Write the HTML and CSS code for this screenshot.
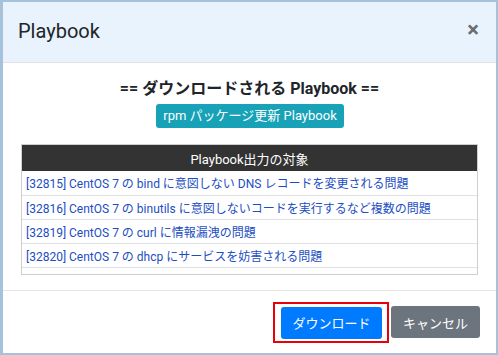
FILE: index.html
```html
<!DOCTYPE html>
<html lang="ja">
<head>
    <meta charset="UTF-8">
    <meta name="viewport" content="width=device-width, initial-scale=1.0">
    <title>Playbook</title>
    <link rel="stylesheet" href="styles.css">
</head>
<body>
    <div class="modal">
        <div class="modal-header">
            <h5 class="modal-title">Playbook</h5>
            <button class="close">&times;</button>
        </div>

        <div class="modal-body">
            <h6 class="target-title">== ダウンロードされる Playbook ==</h6>
            <div class="badge-row">
                <span class="badge">rpm パッケージ更新 Playbook</span>
            </div>

            <div class="table-wrap">
                <table>
                    <thead>
                        <tr>
                            <th>Playbook出力の対象</th>
                        </tr>
                    </thead>
                    <tbody>
                        <tr><td><a href="#">[32815] CentOS 7 の bind に意図しない DNS レコードを変更される問題</a></td></tr>
                        <tr><td><a href="#">[32816] CentOS 7 の binutils に意図しないコードを実行するなど複数の問題</a></td></tr>
                        <tr><td><a href="#">[32819] CentOS 7 の curl に情報漏洩の問題</a></td></tr>
                        <tr><td><a href="#">[32820] CentOS 7 の dhcp にサービスを妨害される問題</a></td></tr>
                        <tr><td><a href="#">[32821] CentOS 7 の elfutils にサービスを妨害される複数の問題</a></td></tr>
                        <tr><td><a href="#">[32822] CentOS 7 の file に意図しないコードを実行される問題</a></td></tr>
                    </tbody>
                </table>
            </div>
        </div>

        <div class="modal-footer">
            <span class="highlight">
                <button class="btn btn-primary">ダウンロード</button>
            </span>
            <button class="btn btn-secondary">キャンセル</button>
        </div>
    </div>
</body>
</html>
```

FILE: styles.css
```css
* {
    box-sizing: border-box;
}
body {
    margin: 0;
    padding: 2px 2px 2px 3px;
    background: #a6c1da;
    font-family: Roboto, "Noto Sans CJK JP", sans-serif;
    color: #212529;
}
.modal {
    width: 493px;
    height: 351px;
    background: #fff;
    display: flex;
    flex-direction: column;
}
.modal-header {
    height: 61px;
    flex-shrink: 0;
    background: #e8f3fd;
    border-bottom: 1px solid #dee2e6;
    display: flex;
    align-items: center;
    justify-content: space-between;
    padding: 0 17px 0 15px;
}
.modal-title {
    margin: 0;
    font-size: 20px;
    font-weight: 400;
    padding-bottom: 2px;
}
.close {
    border: none;
    background: none;
    font-family: Roboto, sans-serif;
    font-size: 22px;
    font-weight: 700;
    color: #6c6c6c;
    padding: 0;
    line-height: 1;
    margin-bottom: 4px;
}
.modal-body {
    padding: 15px 18px;
    height: 227px;
    flex-shrink: 0;
}
.target-title {
    margin: 0;
    text-align: center;
    font-size: 16px;
    font-weight: 700;
    line-height: 21px;
}
.badge-row {
    display: flex;
    justify-content: center;
    margin-top: 5px;
    padding-left: 1px;
}
.badge {
    background: #17a2b8;
    color: #fff;
    font-size: 13px;
    line-height: 24px;
    height: 24px;
    padding: 0 7px;
    border-radius: 3px;
}
.table-wrap {
    margin-top: 16px;
    height: 131px;
    border: 1px solid #cfcfcf;
    overflow-y: scroll;
}
.table-wrap::-webkit-scrollbar {
    width: 11px;
    background: #dedede;
}
.table-wrap::-webkit-scrollbar-thumb {
    background: #c6c6c6;
    border-radius: 4px;
    border: 3px solid #dedede;
}
table {
    width: 100%;
    border-collapse: collapse;
}
th {
    background: #333;
    color: #fff;
    font-size: 13px;
    font-weight: 400;
    height: 26px;
    padding: 0;
}
td {
    height: 24px;
    padding: 0 4px;
    border-bottom: 1px solid #dee2e6;
    font-size: 12px;
    white-space: nowrap;
}
td a {
    color: #1b4ec2;
    text-decoration: none;
}
.modal-footer {
    flex: 1;
    border-top: 1px solid #e6e6e6;
    display: flex;
    align-items: center;
    justify-content: flex-end;
    padding: 0 16px 0 0;
}
.highlight {
    border: 2px solid #e8000b;
    padding: 3px 5px 2px 6px;
    display: flex;
    margin-right: 2px;
}
.btn {
    font-family: Roboto, "Noto Sans CJK JP", sans-serif;
    font-size: 13px;
    height: 32px;
    border: none;
    border-radius: 3px;
    color: #fff;
    padding: 0;
}
.btn-primary {
    background: #007bff;
    width: 101px;
}
.btn-secondary {
    background: #6c757d;
    width: 89px;
}
```
